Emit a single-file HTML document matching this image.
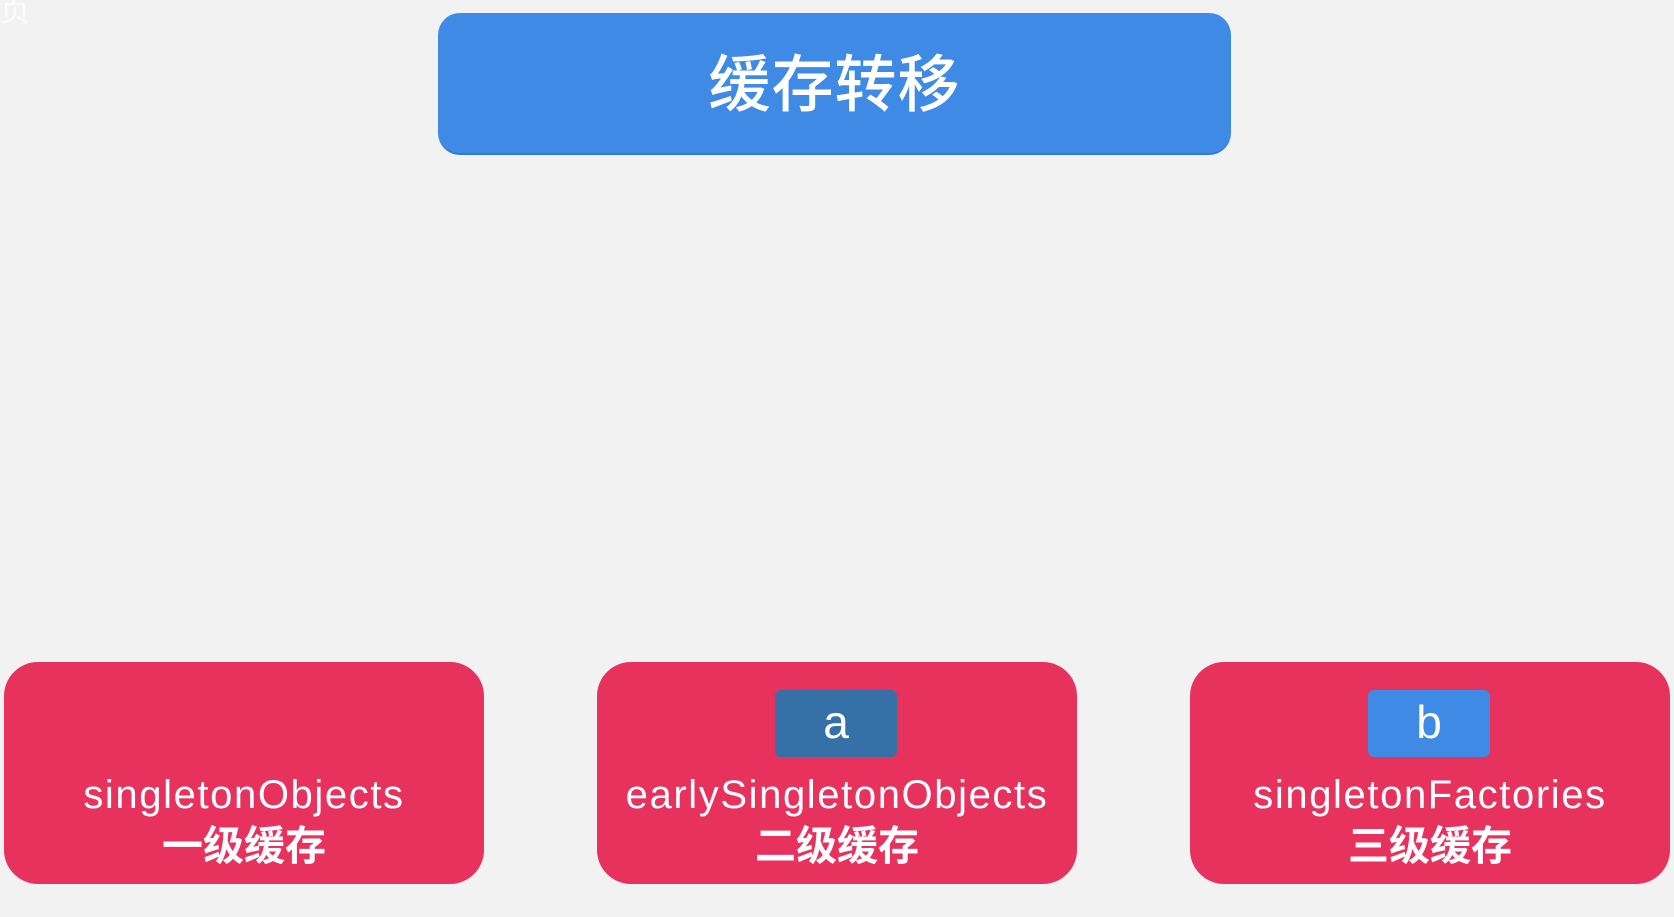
<!DOCTYPE html>
<html><head><meta charset="utf-8"><style>
html,body{margin:0;padding:0;}
body{width:1674px;height:917px;background:#f2f2f2;position:relative;overflow:hidden;font-family:"Liberation Sans","Noto Sans CJK SC",sans-serif;}
.top{position:absolute;left:438px;top:13px;width:793px;height:142px;background:#3f8ae4;border-radius:22px;border-bottom:2px solid #2f7bd8;box-sizing:border-box;color:#fff;font-size:62px;font-weight:500;display:flex;align-items:center;justify-content:center;font-family:"Noto Sans CJK SC",sans-serif;letter-spacing:1px;padding-bottom:8px;}
.card{position:absolute;top:662px;width:480px;height:222px;background:#e8325e;border-radius:34px;color:#fff;text-align:center;}
.name{position:absolute;left:-20px;right:-20px;top:110px;font-size:40px;line-height:46px;letter-spacing:1.6px;}
.cn{position:absolute;left:0;right:0;top:157px;font-size:41px;line-height:46px;font-weight:bold;font-family:"Noto Sans CJK SC",sans-serif;}
.tag{position:absolute;left:178px;top:28px;width:122px;height:67px;border-radius:6px;color:#fff;font-size:46px;line-height:64px;text-align:center;}
.ghost{position:absolute;left:0;top:-14px;color:#fff;font-size:30px;opacity:.8;font-family:"Noto Sans CJK SC",sans-serif;}
</style></head><body>
<div class="ghost">页</div>
<div class="top">缓存转移</div>
<div class="card" style="left:4px"><div class="name">singletonObjects</div><div class="cn">一级缓存</div></div>
<div class="card" style="left:597px"><div class="tag" style="background:#3570a6">a</div><div class="name">earlySingletonObjects</div><div class="cn">二级缓存</div></div>
<div class="card" style="left:1190px"><div class="tag" style="background:#3f8ae4">b</div><div class="name">singletonFactories</div><div class="cn">三级缓存</div></div>
</body></html>
